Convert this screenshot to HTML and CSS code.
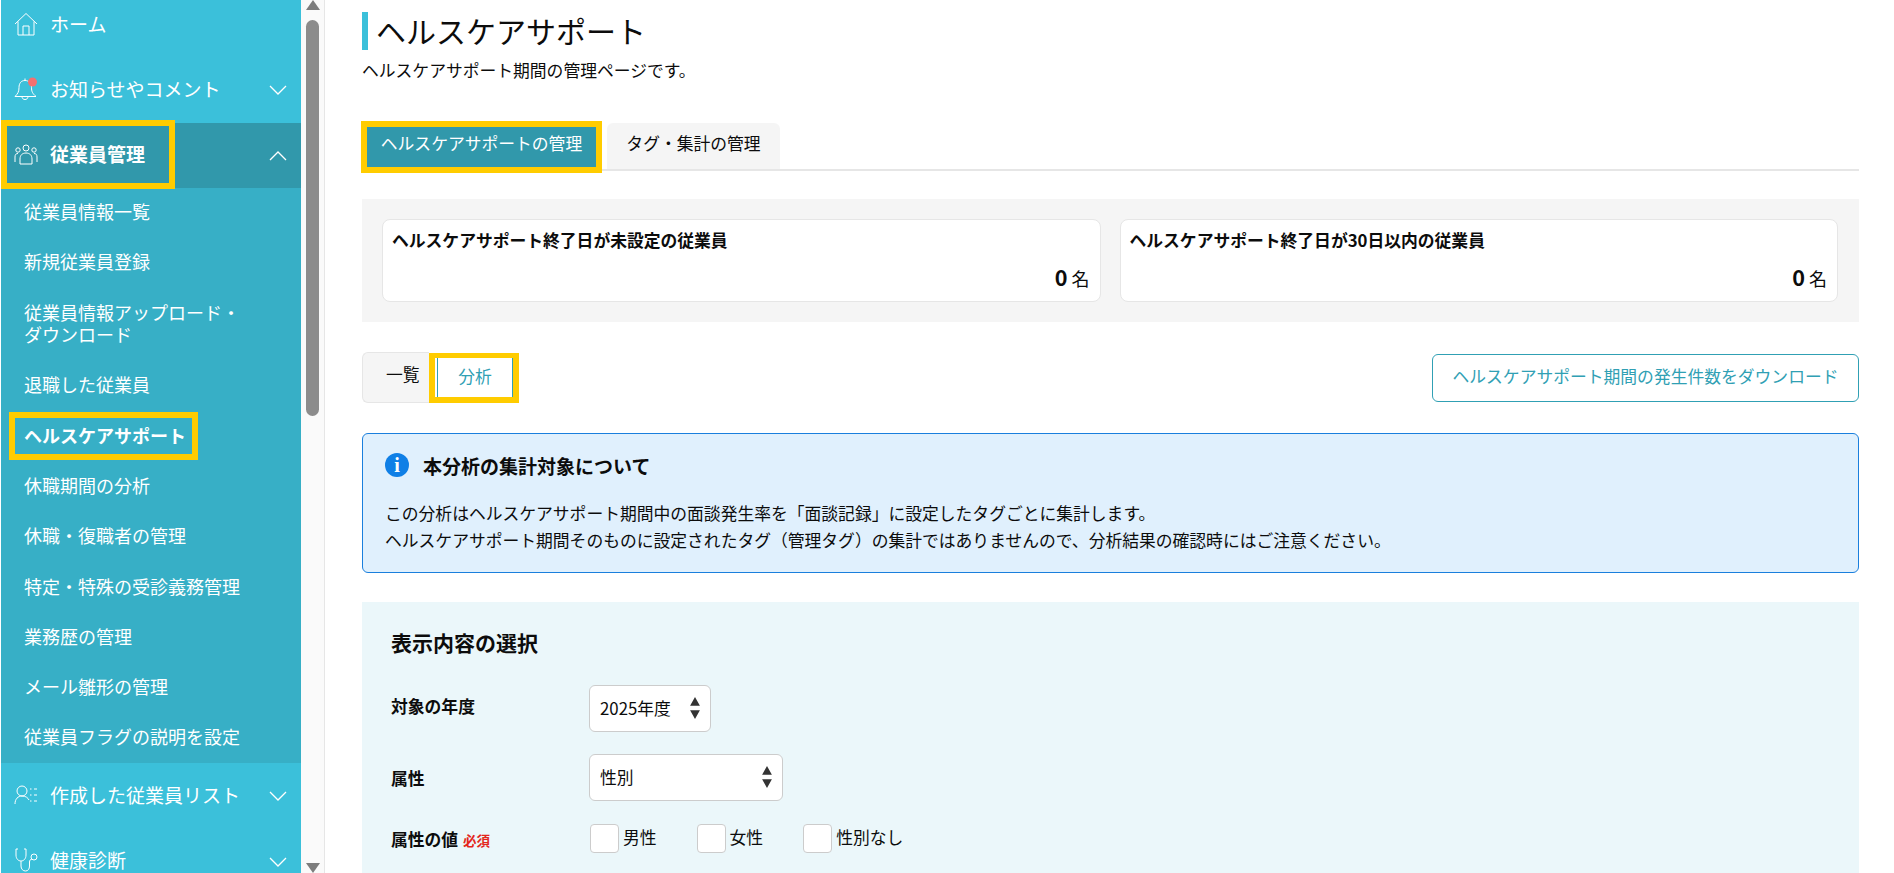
FILE: index.html
```html
<!DOCTYPE html>
<html lang="ja">
  <head>
    <meta charset="UTF-8" />
    <meta name="viewport" content="width=device-width, initial-scale=1.0" />
    <title>ヘルスケアサポート</title>
    <link rel="stylesheet" href="styles.css">
  </head>

  <body>
    <div class="page">
      <aside class="sidebar">
        <ul class="nav">
          <li class="nav-item">
            <svg class="nav-icon" viewBox="0 0 24 24"><path d="M1 12 12 1.500 23 12M4 9.500V23h16V9.500M9 23v-9h6v9" /></svg>
            <span>ホーム</span>
          </li>
          <li class="nav-item">
            <svg class="nav-icon" viewBox="0 0 24 24"><path d="M11 1.500v2M11 3.500c-4 0-6 3-6 7 0 4-1 6-4 9h21c-3.500-3-4.500-5-4.500-9 0-4-2.500-7-6.500-7zM8 19.500c0 2 1.300 3 3 3s3-1 3-3" /><circle class="dot" cx="18.500" cy="5" r="4.500" /></svg>
            <span>お知らせやコメント</span>
            <svg class="chevron" viewBox="0 0 18 10"><path d="M1 1l8 8 8-8" /></svg>
          </li>
          <li class="nav-item nav-item-open">
            <svg class="nav-icon" viewBox="0 0 24 24"><circle cx="12" cy="6" r="3" /><path d="M6 22v-5c0-4 2.500-6 6-6s6 2 6 6v5z" /><circle cx="4" cy="8" r="2.200" /><path d="M1 20v-5c0-2.500 1-3.500 3-3.500" /><circle cx="20" cy="8" r="2.200" /><path d="M23 20v-5c0-2.500-1-3.500-3-3.500" /></svg>
            <span>従業員管理</span>
            <svg class="chevron" viewBox="0 0 18 10"><path d="M1 9l8-8 8 8" /></svg>
            <i class="mark mark-open"></i>
          </li>
          <li>
            <ul class="subnav">
              <li>従業員情報一覧</li>
              <li>新規従業員登録</li>
              <li>従業員情報アップロード・<br />ダウンロード</li>
              <li>退職した従業員</li>
              <li class="subnav-current">ヘルスケアサポート<i class="mark mark-current"></i></li>
              <li>休職期間の分析</li>
              <li>休職・復職者の管理</li>
              <li>特定・特殊の受診義務管理</li>
              <li>業務歴の管理</li>
              <li>メール雛形の管理</li>
              <li>従業員フラグの説明を設定</li>
            </ul>
          </li>
          <li class="nav-item">
            <svg class="nav-icon" viewBox="0 0 24 24"><circle cx="8" cy="8" r="5" /><path d="M1 21c0-5 3-8 7-8s6 2 7 4M16 6h1.500M20 6h3M16 12h1.500M20 12h3M16 18h1.500M20 18h3" /></svg>
            <span>作成した従業員リスト</span>
            <svg class="chevron" viewBox="0 0 18 10"><path d="M1 1l8 8 8-8" /></svg>
          </li>
          <li class="nav-item">
            <svg class="nav-icon" viewBox="0 0 24 24"><path d="M4 1H2v6c0 4 2.500 6 5 6s5-2 5-6V1h-2M7 13v5c0 3 2 5 4.500 5s4-2 4-5v-4c0-1.500 1-3 2.500-3" /><circle cx="20" cy="9" r="3" /></svg>
            <span>健康診断</span>
            <svg class="chevron" viewBox="0 0 18 10"><path d="M1 1l8 8 8-8" /></svg>
          </li>
        </ul>
      </aside>

      <div class="scrollbar">
        <div class="scroll-up"></div>
        <div class="scroll-thumb"></div>
        <div class="scroll-down"></div>
      </div>

      <main class="main">
        <h1 class="title">ヘルスケアサポート</h1>
        <p class="lead">ヘルスケアサポート期間の管理ページです。</p>

        <div class="tabs">
          <div class="tab tab-active">ヘルスケアサポートの管理</div>
          <div class="tab">タグ・集計の管理</div>
        </div>

        <div class="summary">
          <div class="summary-card">
            <div class="summary-title">ヘルスケアサポート終了日が未設定の従業員</div>
            <div class="summary-count"><b>0</b> 名</div>
          </div>
          <div class="summary-card">
            <div class="summary-title">ヘルスケアサポート終了日が30日以内の従業員</div>
            <div class="summary-count"><b>0</b> 名</div>
          </div>
        </div>

        <div class="view-row">
          <div class="switch">
            <div class="switch-item">一覧</div>
            <div class="switch-current"><span>分析</span></div>
          </div>
          <button class="download" type="button">ヘルスケアサポート期間の発生件数をダウンロード</button>
        </div>

        <div class="info">
          <div class="info-head">
            <span class="info-icon">i</span>
            <span>本分析の集計対象について</span>
          </div>
          <p class="info-text">
            この分析はヘルスケアサポート期間中の面談発生率を「面談記録」に設定したタグごとに集計します。<br />
            ヘルスケアサポート期間そのものに設定されたタグ（管理タグ）の集計ではありませんので、分析結果の確認時にはご注意ください。
          </p>
        </div>

        <section class="filter">
          <h2 class="filter-title">表示内容の選択</h2>
          <div class="filter-row">
            <div class="filter-label filter-label-year">対象の年度</div>
            <div class="select select-year">
              <span>2025年度</span>
              <svg class="select-arrows" viewBox="0 0 10 22"><path d="M5 1l4.500 8h-9zM5 21l4.500-8h-9z" /></svg>
            </div>
          </div>
          <div class="filter-row">
            <div class="filter-label">属性</div>
            <div class="select select-attr">
              <span>性別</span>
              <svg class="select-arrows" viewBox="0 0 10 22"><path d="M5 1l4.500 8h-9zM5 21l4.500-8h-9z" /></svg>
            </div>
          </div>
          <div class="filter-row filter-row-checks">
            <div class="filter-label">属性の値 <em class="required">必須</em></div>
            <div class="checks">
              <label class="check"><i class="check-box"></i>男性</label>
              <label class="check"><i class="check-box"></i>女性</label>
              <label class="check"><i class="check-box"></i>性別なし</label>
            </div>
          </div>
        </section>
      </main>
    </div>
  </body>
</html>
```

FILE: styles.css
```css
* {
  box-sizing: border-box;
}

html,
body {
  margin: 0;
  padding: 0;
  height: 100%;
  overflow: hidden;
}

body {
  font-family: "Noto Sans CJK JP", "Noto Sans", sans-serif;
  font-size: 16.8px;
  background-color: #fff;
  color: #0c0c0c;
}

ul {
  list-style: none;
  margin: 0;
  padding: 0;
}

.page {
  display: flex;
  height: 873px;
  overflow: hidden;
}

/* Sidebar */
.sidebar {
  width: 300px;
  margin-left: 1px;
  flex-shrink: 0;
  overflow: hidden;
  background-color: #3bc0da;
  color: #fff;
}

.nav {
  margin-top: -8px;
}

.nav-item {
  position: relative;
  display: flex;
  align-items: center;
  height: 65.400px;
  padding: 0 0 2px 13px;
  font-size: 19px;
  line-height: 24px;
}

.nav-icon {
  width: 24px;
  height: 24px;
  margin-right: 12px;
  fill: none;
  stroke: #fff;
  stroke-width: 1;
}

.nav-icon .dot {
  fill: #f47070;
  stroke: none;
}

.chevron {
  position: absolute;
  right: 14px;
  top: 28px;
  width: 18px;
  height: 10px;
  fill: none;
  stroke: #fff;
  stroke-width: 1.300;
}

.nav-item-open {
  background-color: #3198ab;
  font-weight: 700;
}

.subnav {
  height: 575px;
  background-color: #37afc6;
  font-size: 18px;
}

.subnav li {
  position: relative;
  padding: 12px 10px 16px 23px;
  line-height: 22.300px;
}

.subnav-current {
  font-weight: 700;
}

.mark {
  position: absolute;
  border: 6px solid #fc0;
}

.mark-open {
  left: 0;
  top: -3px;
  width: 174px;
  height: 69px;
}

.subnav li .mark-current {
  left: 8px;
  top: 0;
  width: 189px;
  height: 48px;
}

/* Scrollbar */
.scrollbar {
  display: flex;
  flex-direction: column;
  align-items: center;
  justify-content: space-between;
  width: 24px;
  flex-shrink: 0;
  background-color: #fafafa;
  border-right: 1px solid #e6e6e6;
}

.scroll-up,
.scroll-down {
  width: 0;
  height: 0;
  border-left: 7px solid transparent;
  border-right: 7px solid transparent;
}

.scroll-up {
  border-bottom: 10px solid #7d7d7d;
}

.scroll-down {
  border-top: 10px solid #7d7d7d;
}

.scroll-thumb {
  width: 13px;
  height: 396px;
  margin-top: 10px;
  margin-bottom: auto;
  border-radius: 7px;
  background-color: #8c8c8c;
}

/* Main */
.main {
  width: 1497px;
  margin-left: 37px;
  padding-top: 12px;
  flex-shrink: 0;
}

.title {
  height: 38px;
  margin: 0;
  padding-left: 8px;
  border-left: 6px solid #3bc0da;
  font-size: 30px;
  font-weight: 400;
  line-height: 36px;
}

.lead {
  margin: 8px 0 0;
  line-height: 24px;
}

.tabs {
  display: flex;
  align-items: flex-start;
  height: 48px;
  margin-top: 41px;
  border-bottom: 2px solid #e6e6e6;
}

.tab {
  position: relative;
  width: 173px;
  height: 46px;
  margin-left: 5px;
  border-radius: 6px 6px 0 0;
  background-color: #f5f5f5;
  text-align: center;
  line-height: 40px;
}

.tab-active {
  width: 241px;
  height: 52px;
  margin: -2px 0 0 -1px;
  border: 6px solid #fc0;
  border-radius: 0;
  background-color: #3198ab;
  color: #fff;
  line-height: 32px;
}

.summary {
  display: flex;
  gap: 19px;
  margin-top: 28px;
  padding: 20px 21px 20px 20px;
  background-color: #f5f5f5;
}

.summary-card {
  flex: 1;
  height: 83px;
  padding: 8px 10px 0 9px;
  border: 1px solid #e6e6e6;
  border-radius: 8px;
  background-color: #fff;
}

.summary-title {
  font-weight: 700;
  line-height: 24px;
}

.summary-count {
  margin-top: 13px;
  font-size: 18px;
  text-align: right;
  line-height: 24px;
}

.summary-count b {
  font-size: 21.600px;
}

.view-row {
  display: flex;
  justify-content: space-between;
  align-items: center;
  margin-top: 30px;
}

.switch {
  display: flex;
  height: 51px;
}

.switch-item {
  width: 67px;
  padding-left: 23px;
  border: 1px solid #e6e6e6;
  border-right: 0;
  border-radius: 6px 0 0 6px;
  background-color: #f5f5f5;
  line-height: 43px;
}

.switch-current {
  width: 90px;
  height: 50px;
  margin-top: 1px;
  padding-left: 2px;
  border: solid #fc0;
  border-width: 5px 6px 6px;
  background-color: #fff;
}

.switch-current span {
  display: block;
  height: 39px;
  border: solid #30a0b4;
  border-width: 0 1px;
  color: #30a0b4;
  text-align: center;
  line-height: 36px;
}

.download {
  width: 427px;
  height: 48px;
  padding: 0 0 3px;
  border: 1px solid #30a0b4;
  border-radius: 6px;
  background-color: #fff;
  color: #30a0b4;
  font-family: inherit;
  font-size: 16.800px;
}

.info {
  margin-top: 30px;
  padding: 19px 22px 18px;
  border: 1px solid #1a7fdd;
  border-radius: 6px;
  background-color: #e0f0fd;
}

.info-head {
  display: flex;
  align-items: center;
  gap: 14px;
  height: 24px;
  font-size: 19px;
  font-weight: 700;
}

.info-icon {
  width: 24px;
  height: 24px;
  border-radius: 50%;
  background-color: #0f7fe6;
  color: #fff;
  font-family: "Liberation Serif", serif;
  font-size: 20px;
  text-align: center;
  line-height: 24px;
}

.info-text {
  margin: 23px 0 0;
  line-height: 27px;
}

.filter {
  margin-top: 29px;
  padding: 26px 29px 40px;
  background-color: #ebf7fa;
}

.filter-title {
  margin: 0 0 29px;
  font-size: 21px;
  line-height: 28px;
}

.filter-row {
  display: flex;
  align-items: center;
  margin-bottom: 22px;
}

.filter-row-checks {
  margin-top: 23px;
}

.filter-label {
  width: 198px;
  font-weight: 700;
}

.filter-label-year {
  padding-bottom: 5px;
}

.required {
  margin-left: 1px;
  color: #e3261b;
  font-size: 13.500px;
  font-style: normal;
}

.select {
  display: flex;
  justify-content: space-between;
  align-items: center;
  height: 47px;
  padding: 0 9px 2px 10px;
  border: 1px solid #ccc;
  border-radius: 6px;
  background-color: #fff;
}

.select-year {
  width: 122px;
}

.select-attr {
  width: 194px;
}

.select-arrows {
  width: 12px;
  height: 24px;
  fill: #333;
}

.checks {
  display: flex;
  gap: 40px;
  margin-left: 1px;
}

.check {
  display: flex;
  align-items: flex-start;
  gap: 4px;
  line-height: 27px;
}

.check-box {
  width: 29px;
  height: 29px;
  border: 1px solid #ccc;
  border-radius: 4px;
  background-color: #fff;
}
```
